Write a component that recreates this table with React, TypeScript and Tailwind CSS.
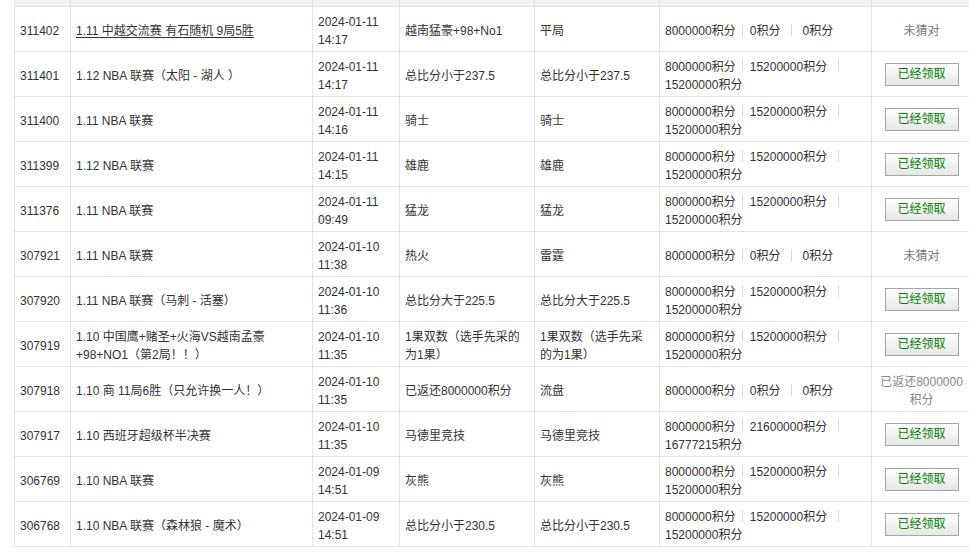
type Row = {
  id: string;
  title: string[];
  link?: boolean;
  date: string;
  time: string;
  pick: string[];
  result: string[];
  bets: [string, string, string];
  status: "claimed" | "wrong" | "refund";
};

const rows: Row[] = [
  { id: "311402", title: ["1.11 中越交流赛 有石随机 9局5胜"], link: true, date: "2024-01-11", time: "14:17", pick: ["越南猛豪+98+No1"], result: ["平局"], bets: ["8000000", "0", "0"], status: "wrong" },
  { id: "311401", title: ["1.12 NBA 联赛（太阳 - 湖人 ）"], date: "2024-01-11", time: "14:17", pick: ["总比分小于237.5"], result: ["总比分小于237.5"], bets: ["8000000", "15200000", "15200000"], status: "claimed" },
  { id: "311400", title: ["1.11 NBA 联赛"], date: "2024-01-11", time: "14:16", pick: ["骑士"], result: ["骑士"], bets: ["8000000", "15200000", "15200000"], status: "claimed" },
  { id: "311399", title: ["1.12 NBA 联赛"], date: "2024-01-11", time: "14:15", pick: ["雄鹿"], result: ["雄鹿"], bets: ["8000000", "15200000", "15200000"], status: "claimed" },
  { id: "311376", title: ["1.11 NBA 联赛"], date: "2024-01-11", time: "09:49", pick: ["猛龙"], result: ["猛龙"], bets: ["8000000", "15200000", "15200000"], status: "claimed" },
  { id: "307921", title: ["1.11 NBA 联赛"], date: "2024-01-10", time: "11:38", pick: ["热火"], result: ["雷霆"], bets: ["8000000", "0", "0"], status: "wrong" },
  { id: "307920", title: ["1.11 NBA 联赛（马刺 - 活塞）"], date: "2024-01-10", time: "11:36", pick: ["总比分大于225.5"], result: ["总比分大于225.5"], bets: ["8000000", "15200000", "15200000"], status: "claimed" },
  { id: "307919", title: ["1.10 中国鹰+赌圣+火海VS越南孟豪", "+98+NO1（第2局！！）"], date: "2024-01-10", time: "11:35", pick: ["1果双数（选手先采的", "为1果）"], result: ["1果双数（选手先采", "的为1果）"], bets: ["8000000", "15200000", "15200000"], status: "claimed" },
  { id: "307918", title: ["1.10 商 11局6胜（只允许换一人！）"], date: "2024-01-10", time: "11:35", pick: ["已返还8000000积分"], result: ["流盘"], bets: ["8000000", "0", "0"], status: "refund" },
  { id: "307917", title: ["1.10 西班牙超级杯半决赛"], date: "2024-01-10", time: "11:35", pick: ["马德里竞技"], result: ["马德里竞技"], bets: ["8000000", "21600000", "16777215"], status: "claimed" },
  { id: "306769", title: ["1.10 NBA 联赛"], date: "2024-01-09", time: "14:51", pick: ["灰熊"], result: ["灰熊"], bets: ["8000000", "15200000", "15200000"], status: "claimed" },
  { id: "306768", title: ["1.10 NBA 联赛（森林狼 - 魔术）"], date: "2024-01-09", time: "14:51", pick: ["总比分小于230.5"], result: ["总比分小于230.5"], bets: ["8000000", "15200000", "15200000"], status: "claimed" },
];

const cols = "grid grid-cols-[56px_242px_87px_135px_125px_212px_100px]";
const cell = "border-l border-b border-[#e3e3e3] px-[5px] pt-[4px] flex items-center";

function Lines({ lines }: { lines: string[] }) {
  return (
    <div>
      {lines.map((l, i) => (
        <div key={i} className="whitespace-nowrap">
          {l}
        </div>
      ))}
    </div>
  );
}

function Status({ status }: { status: Row["status"] }) {
  if (status === "claimed") {
    return (
      <button className="-mt-[3px] w-[74px] h-[23px] border border-[#a6a6a6] bg-gradient-to-b from-[#ffffff] to-[#e6e6e6] text-[#008000] text-[12px] leading-[21px] shadow-[inset_0_1px_0_#fff]">
        已经领取
      </button>
    );
  }
  if (status === "wrong") {
    return <span className="text-[#777]">未猜对</span>;
  }
  return (
    <div className="text-[#888] text-center">
      <div>已返还8000000</div>
      <div>积分</div>
    </div>
  );
}

export default function App() {
  return (
    <div className="w-[969px] h-[556px] overflow-hidden bg-white text-[#333] text-[12px] leading-[18px] font-['Liberation_Sans','Noto_Sans_CJK_SC',sans-serif]">
      <div className="ml-[14px] w-[957px]">
        <div className={`${cols} h-[7px] bg-[#f2f2f2]`}>
          {Array.from({ length: 7 }).map((_, i) => (
            <div key={i} className="border-l border-b border-[#e3e3e3]" />
          ))}
        </div>
        {rows.map((r) => (
          <div key={r.id} className={`${cols} h-[45px]`}>
            <div className={cell}>{r.id}</div>
            <div className={cell}>
              {r.link ? (
                <a className="underline underline-offset-2 whitespace-nowrap">{r.title[0]}</a>
              ) : (
                <Lines lines={r.title} />
              )}
            </div>
            <div className={cell}>
              <Lines lines={[r.date, r.time]} />
            </div>
            <div className={cell}>
              <Lines lines={r.pick} />
            </div>
            <div className={cell}>
              <Lines lines={r.result} />
            </div>
            <div className={cell}>
              <div>
                {r.bets[0]}积分
                <span className="inline-block w-px h-[12px] bg-[#cfd8e2] align-[-1px] ml-[6px] mr-[7px]" />
                {r.bets[1]}积分
                <span className="inline-block w-px h-[12px] bg-[#cfd8e2] align-[-1px] ml-[11px] mr-[10px]" />
                {r.bets[2]}积分
              </div>
            </div>
            <div className={`${cell} justify-center`}>
              <Status status={r.status} />
            </div>
          </div>
        ))}
      </div>
    </div>
  );
}
